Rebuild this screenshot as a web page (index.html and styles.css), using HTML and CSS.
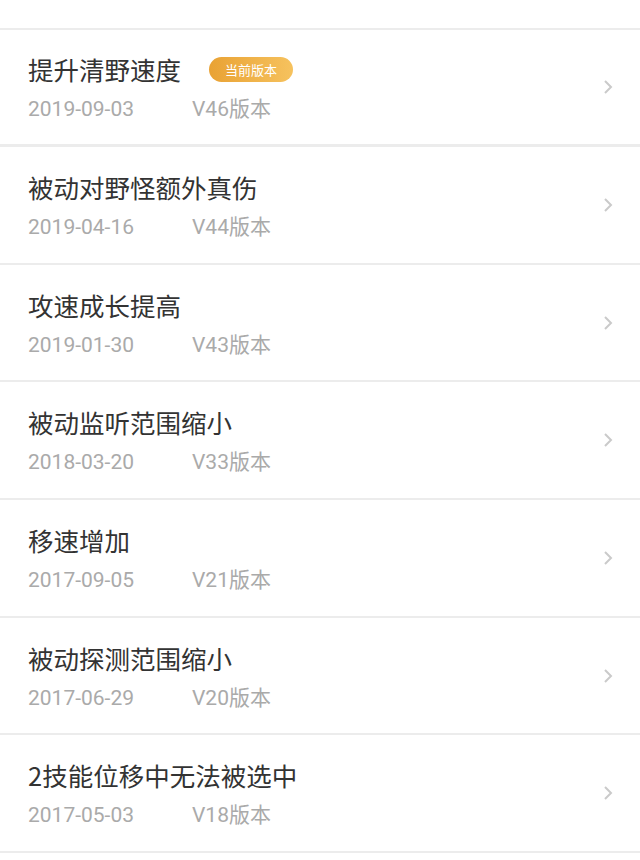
FILE: index.html
```html
<!DOCTYPE html>
<html lang="zh-CN">
<head>
<meta charset="UTF-8" />
<meta name="viewport" content="width=device-width, initial-scale=1" />
<title>版本调整记录</title>
<link rel="stylesheet" href="styles.css">
</head>
<body>
  <div id="app">
    <ul class="change-list">
      <li class="change-item current">
        <div class="item-text">
          <div class="item-title">提升清野速度 <span class="badge">当前版本</span></div>
          <div class="item-meta"><span class="date">2019-09-03</span><span class="ver">V46版本</span></div>
        </div>
        <svg class="chevron" width="12" height="18" viewBox="0 0 12 18"><path d="M3 3 L9 9 L3 15" /></svg>
      </li>
      <li class="change-item">
        <div class="item-text">
          <div class="item-title">被动对野怪额外真伤</div>
          <div class="item-meta"><span class="date">2019-04-16</span><span class="ver">V44版本</span></div>
        </div>
        <svg class="chevron" width="12" height="18" viewBox="0 0 12 18"><path d="M3 3 L9 9 L3 15" /></svg>
      </li>
      <li class="change-item">
        <div class="item-text">
          <div class="item-title">攻速成长提高</div>
          <div class="item-meta"><span class="date">2019-01-30</span><span class="ver">V43版本</span></div>
        </div>
        <svg class="chevron" width="12" height="18" viewBox="0 0 12 18"><path d="M3 3 L9 9 L3 15" /></svg>
      </li>
      <li class="change-item">
        <div class="item-text">
          <div class="item-title">被动监听范围缩小</div>
          <div class="item-meta"><span class="date">2018-03-20</span><span class="ver">V33版本</span></div>
        </div>
        <svg class="chevron" width="12" height="18" viewBox="0 0 12 18"><path d="M3 3 L9 9 L3 15" /></svg>
      </li>
      <li class="change-item">
        <div class="item-text">
          <div class="item-title">移速增加</div>
          <div class="item-meta"><span class="date">2017-09-05</span><span class="ver">V21版本</span></div>
        </div>
        <svg class="chevron" width="12" height="18" viewBox="0 0 12 18"><path d="M3 3 L9 9 L3 15" /></svg>
      </li>
      <li class="change-item">
        <div class="item-text">
          <div class="item-title">被动探测范围缩小</div>
          <div class="item-meta"><span class="date">2017-06-29</span><span class="ver">V20版本</span></div>
        </div>
        <svg class="chevron" width="12" height="18" viewBox="0 0 12 18"><path d="M3 3 L9 9 L3 15" /></svg>
      </li>
      <li class="change-item">
        <div class="item-text">
          <div class="item-title">2技能位移中无法被选中</div>
          <div class="item-meta"><span class="date">2017-05-03</span><span class="ver">V18版本</span></div>
        </div>
        <svg class="chevron" width="12" height="18" viewBox="0 0 12 18"><path d="M3 3 L9 9 L3 15" /></svg>
      </li>
    </ul>
  </div>
</body>
</html>
```

FILE: styles.css
```css
/* Reset & base */
*, *::before, *::after {
  box-sizing: border-box;
}
html, body {
  margin: 0;
  width: 100%;
  height: 100%;
  background: #fff;
  font-family: Roboto, "Noto Sans CJK SC", sans-serif;
  color: #333;
  overflow: hidden;
}
#app {
  padding-top: 28px;
}

.change-list {
  list-style: none;
  margin: 0;
  padding: 0;
  border-top: 2px solid #ececec;
}
.change-item {
  display: flex;
  align-items: center;
  height: 117.7px;
  padding: 0 26px 0 28px;
  border-bottom: 2px solid #ececec;
}
.change-item.current {
  border-bottom-width: 3px;
  height: 117px;
}

.item-text {
  flex: 1;
  display: flex;
  flex-direction: column;
  gap: 14px;
  padding-top: 2px;
}
.item-title {
  display: flex;
  align-items: center;
  font-size: 25.5px;
  line-height: 28px;
  color: #333;
  font-family: "Noto Sans CJK SC", sans-serif;
}
.badge {
  margin-left: 28px;
  height: 25px;
  padding: 0 16px;
  border-radius: 13px;
  background: linear-gradient(90deg, #e9a234, #f6c25e);
  color: #fff;
  font-size: 13px;
  line-height: 25px;
}
.item-meta {
  display: flex;
  font-size: 21px;
  line-height: 24px;
  color: #aaa;
}
.date {
  width: 164px;
}

.chevron {
  flex: none;
}
.chevron path {
  fill: none;
  stroke: #cacaca;
  stroke-width: 2;
}
```
